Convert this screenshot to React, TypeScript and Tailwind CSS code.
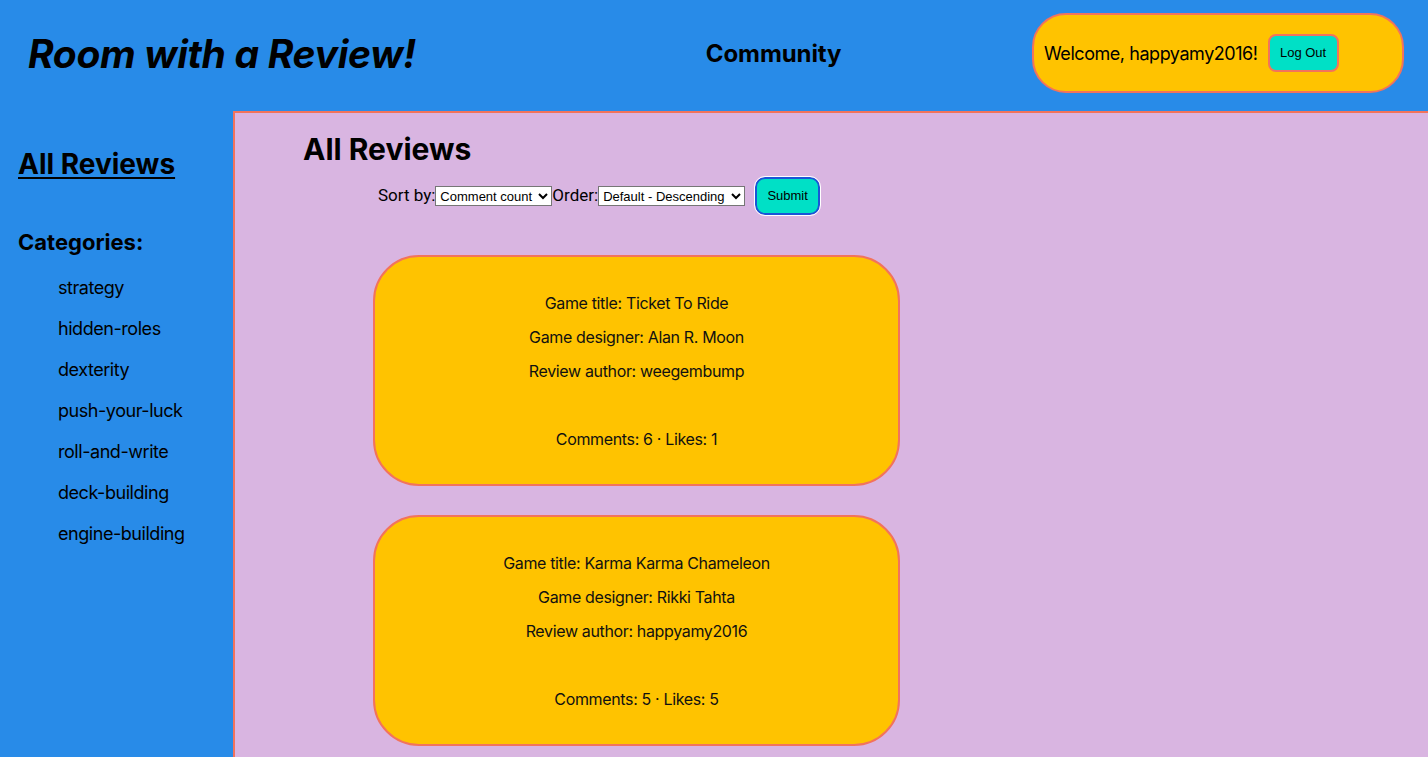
import { useState } from "react"

const categories = [
  "strategy",
  "hidden-roles",
  "dexterity",
  "push-your-luck",
  "roll-and-write",
  "deck-building",
  "engine-building",
]

const reviews = [
  { title: "Ticket To Ride", designer: "Alan R. Moon", author: "weegembump", comments: 6, likes: 1 },
  { title: "Karma Karma Chameleon", designer: "Rikki Tahta", author: "happyamy2016", comments: 5, likes: 5 },
]

function ReviewCard({ review }: { review: (typeof reviews)[number] }) {
  return (
    <div className="mb-[29px] flex h-[231px] w-[527px] flex-col items-center gap-[10px] rounded-[46px] border-2 border-[#f2735c] bg-[#ffc300] pt-[34px] text-[16px] leading-[24px] tracking-[-0.35px] text-[#111]">
      <p>Game title: {review.title}</p>
      <p>Game designer: {review.designer}</p>
      <p>Review author: {review.author}</p>
      <p>&nbsp;</p>
      <p>
        Comments: {review.comments} · Likes: {review.likes}
      </p>
    </div>
  )
}

export default function App() {
  const [sortBy, setSortBy] = useState("comment_count")
  const [order, setOrder] = useState("desc")

  return (
    <div className="flex h-[757px] flex-col overflow-hidden bg-[#288be8] font-['Inter',sans-serif] text-black">
      {/* Header */}
      <header className="flex h-[111px] shrink-0 items-center">
        <h1 className="ml-[28px] mb-[4px] text-[39px] font-bold italic leading-none tracking-[-0.3px]">
          Room with a Review!
        </h1>
        <h2 className="ml-[290px] mb-[4px] text-[24px] font-bold leading-none tracking-[-0.1px]">Community</h2>
        <div className="ml-auto mr-[24px] mb-[5px] flex h-[80px] w-[372px] items-center rounded-[34px] border-2 border-[#f2735c] bg-[#ffc300] pl-[10px]">
          <span className="text-[18px] tracking-[-0.45px]">Welcome, happyamy2016!</span>
          <button className="ml-[10px] h-[38px] w-[71px] rounded-[8px] border-2 border-[#f2735c] bg-[#00e0c6] font-['Liberation_Sans',Arial,sans-serif] text-[13px]">
            Log Out
          </button>
        </div>
      </header>

      <div className="flex flex-1">
        {/* Sidebar */}
        <aside className="w-[233px] shrink-0 px-[18px] pt-[36px]">
          <a href="#" className="text-[28px] font-bold leading-[34px] underline underline-offset-[3px]">
            All Reviews
          </a>
          <h3 className="mt-[46px] text-[22px] font-bold leading-[30px]">Categories:</h3>
          <ul className="mt-[19px] pl-[40px]">
            {categories.map((c) => (
              <li key={c} className="h-[41px] text-[18px] leading-[24px] tracking-[-0.45px]">
                {c}
              </li>
            ))}
          </ul>
        </aside>

        {/* Main */}
        <main className="flex-1 border-l-2 border-t-2 border-[#f2735c] bg-[#d9b5e1] pl-[68px] pt-[18px]">
          <h2 className="text-[30px] font-bold leading-[36px]">All Reviews</h2>
          <form
            className="ml-[75px] mt-[10px] flex items-center font-['Roboto',sans-serif] text-[17px]"
            onSubmit={(e) => e.preventDefault()}
          >
            <label htmlFor="sort">Sort by:</label>
            <select
              id="sort"
              value={sortBy}
              onChange={(e) => setSortBy(e.target.value)}
              className="h-[20px] w-[117px] border border-[#767676] bg-white font-['Liberation_Sans',Arial,sans-serif] text-[13px]"
            >
              <option value="comment_count">Comment count</option>
              <option value="created_at">Date</option>
              <option value="votes">Likes</option>
            </select>
            <label htmlFor="order">Order:</label>
            <select
              id="order"
              value={order}
              onChange={(e) => setOrder(e.target.value)}
              className="h-[20px] w-[147px] border border-[#767676] bg-white font-['Liberation_Sans',Arial,sans-serif] text-[13px]"
            >
              <option value="desc">Default - Descending</option>
              <option value="asc">Ascending</option>
            </select>
            <button
              type="submit"
              className="ml-[10px] h-[38px] w-[65px] rounded-[10px] border-2 border-[#1a55d6] bg-[#00e0c6] font-['Liberation_Sans',Arial,sans-serif] text-[13px] outline outline-1 outline-white"
            >
              Submit
            </button>
          </form>

          <div className="ml-[70px] mt-[40px]">
            {reviews.map((r) => (
              <ReviewCard key={r.title} review={r} />
            ))}
          </div>
        </main>
      </div>
    </div>
  )
}
